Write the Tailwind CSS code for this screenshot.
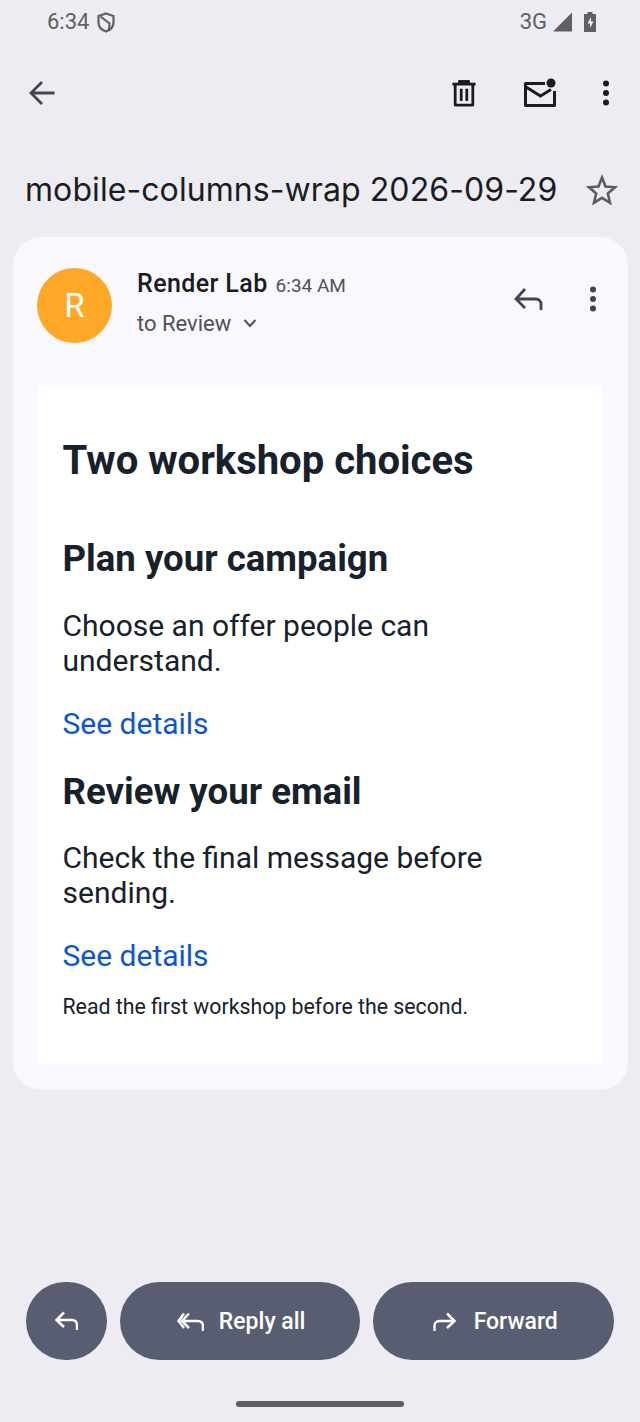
<!DOCTYPE html>
<html lang="en">

<head>
    <meta charset="UTF-8">
    <meta name="viewport" content="width=device-width, initial-scale=1.0">
    <title>mobile-columns-wrap 2026-09-29</title>
    <script src="https://cdn.jsdelivr.net/npm/@tailwindcss/browser@4"></script>
</head>

<body class="bg-[#edecf3] font-['Roboto',sans-serif]">
    <div class="h-[1422px] w-[640px] flex flex-col overflow-hidden">
        <!-- Status bar -->
        <div class="h-[44px] flex items-center justify-between pl-[47px] pr-[43px] text-[#5f5f64]">
            <div class="flex items-center gap-[8px]">
                <span class="text-[22px] leading-none">6:34</span>
                <svg class="w-[18px] h-[21px]" viewBox="0 0 18 21" fill="none" stroke="#5f5f64" stroke-width="2.2">
                    <path d="M9 1.500 16.500 4v6.500c0 4.300-3 7.500-7.500 9-4.500-1.500-7.500-4.700-7.500-9V4z" />
                    <path d="M3.500 4.500 12.500 11.500 12 18" />
                </svg>
            </div>
            <div class="flex items-center">
                <span class="text-[22px] leading-none">3G</span>
                <svg class="w-[20px] h-[20px] ml-[6px]" viewBox="0 0 20 20" fill="#5f5f64">
                    <path d="M0 19.500 19 0.500v19z" />
                </svg>
                <svg class="w-[14px] h-[20px] ml-[10px]" viewBox="0 0 14 20" fill="#5f5f64">
                    <path d="M4.500 0h5v2H13v18H1V2h3.500z" />
                    <path d="M8 5 4.500 11.500H7V16l3.500-6.500H8z" fill="#edecf3" />
                </svg>
            </div>
        </div>

        <!-- Toolbar -->
        <div class="h-[98px] flex items-center justify-between pl-[28px] pr-[30px] pb-[1px]">
            <svg class="w-[28px] h-[28px]" viewBox="0 0 28 28" fill="none" stroke="#44444f" stroke-width="2.800">
                <path d="M26.500 14H4M14 3 3 14l11 11" />
            </svg>
            <div class="flex items-center">
                <svg class="w-[26px] h-[32px]" viewBox="0 0 28 32" fill="none" stroke="#1b1c20" stroke-width="3" stroke-linejoin="round">
                    <path d="M1.500 6.500h25M9 6.500V3.500h10v3M4.500 6.500v22.500h19V6.500" />
                    <path d="M11 11.500v13M17 11.500v13" />
                </svg>
                <svg class="w-[34px] h-[30px] ml-[46px]" viewBox="0 0 34 30" fill="none">
                    <path d="M22 5.500H2.500v22h29V13" stroke="#1b1c20" stroke-width="3" stroke-linejoin="round" />
                    <path d="M3 9l14.500 9L28 11.500" stroke="#1b1c20" stroke-width="3" />
                    <circle cx="28" cy="5" r="4.500" fill="#1b1c20" />
                </svg>
                <svg class="w-[8px] h-[26px] ml-[45px]" viewBox="0 0 8 26" fill="#1b1c20">
                    <circle cx="4" cy="3.500" r="3" />
                    <circle cx="4" cy="13" r="3" />
                    <circle cx="4" cy="22.500" r="3" />
                </svg>
            </div>
        </div>

        <!-- Subject -->
        <div class="h-[95px] flex items-start justify-between pl-[25px] pr-[22px] pt-[26px]">
            <h1 class="text-[32px] leading-[44px] text-[#1b1c20] tracking-[0.08px] font-['Inter',sans-serif] whitespace-nowrap">mobile-columns-wrap 2026-09-29</h1>
            <svg class="w-[32px] h-[31px] mt-[6px]" viewBox="0 0 32 31" fill="none" stroke="#5c5c64" stroke-width="2.600">
                <path d="M16 3.500 19.500 12.500 29 13.300 21.800 19.500 24 28.800 16 23.800 8 28.800 10.200 19.500 3 13.300 12.500 12.500z" />
            </svg>
        </div>

        <!-- Message card -->
        <div class="mx-[12.500px] h-[853px] bg-[#f9f8ff] rounded-[28px] px-[25.500px] flex flex-col">
            <div class="h-[150px] flex items-start pt-[31px]">
                <div class="w-[75px] h-[75px] -ml-[1px] rounded-full bg-[#ffa726] text-white flex items-center justify-center text-[33px] shrink-0">R</div>
                <div class="ml-[25px] flex-1 pt-[1px]">
                    <div class="flex items-baseline">
                        <span class="text-[25px] leading-[30px] font-medium tracking-[0.4px] text-[#1b1c20]">Render Lab</span>
                        <span class="text-[19px] ml-[8px] text-[#50505a]">6:34 AM</span>
                    </div>
                    <div class="flex items-center mt-[8px] text-[#50505a]">
                        <span class="text-[22px] leading-[30px]">to Review</span>
                        <svg class="w-[14px] h-[9px] ml-[12px]" viewBox="0 0 14 9" fill="none" stroke="#50505a" stroke-width="2">
                            <path d="M1.500 1 7 7l5.500-6" />
                        </svg>
                    </div>
                </div>
                <svg class="w-[30px] h-[24px] mt-[19px]" viewBox="0 0 30 24" fill="none" stroke="#44444f" stroke-width="2.800">
                    <path d="M28 23v-6c0-3-2-5-5-5H4M12 2 3 12l9 9" />
                </svg>
                <svg class="w-[8px] h-[26px] ml-[46px] mr-[5px] mt-[18px]" viewBox="0 0 8 26" fill="#44444f">
                    <circle cx="4" cy="3.500" r="3" />
                    <circle cx="4" cy="13" r="3" />
                    <circle cx="4" cy="22.500" r="3" />
                </svg>
            </div>

            <!-- Email body -->
            <div class="bg-white h-[677px] pl-[24.500px] pr-[25px] pt-[49px] text-[#17212b]">
                <h2 class="text-[40px] leading-[50px] font-bold">Two workshop choices</h2>
                <h3 class="text-[36.600px] leading-[44px] font-bold mt-[51px]">Plan your campaign</h3>
                <p class="text-[30px] leading-[34.500px] mt-[28px]">Choose an offer people can understand.</p>
                <a href="#" class="block text-[30px] leading-[34px] text-[#0b57d0] mt-[28.500px]">See details</a>
                <h3 class="text-[36.600px] leading-[44px] font-bold mt-[29px]">Review your email</h3>
                <p class="text-[30px] leading-[34.500px] mt-[27.500px]">Check the final message before sending.</p>
                <a href="#" class="block text-[30px] leading-[34px] text-[#0b57d0] mt-[28.500px]">See details</a>
                <p class="text-[21.300px] leading-[28px] mt-[20.500px]">Read the first workshop before the second.</p>
            </div>
        </div>

        <!-- Bottom actions -->
        <div class="flex-1 flex flex-col justify-end">
            <div class="flex gap-[13px] px-[26px] text-white text-[23px]">
                <button class="w-[81px] h-[78px] rounded-full bg-[#585d71] flex items-center justify-center">
                    <svg class="w-[24px] h-[20px]" viewBox="0 0 24 20" fill="none" stroke="#fff" stroke-width="2.500">
                        <path d="M23 19v-5c0-3-2-5-5-5H3M10 1.500 2.500 9l7.500 7" />
                    </svg>
                </button>
                <button class="w-[241px] h-[78px] rounded-full bg-[#585d71] flex items-center justify-center font-medium pl-[2px] pt-[2px]">
                    <svg class="w-[27px] h-[20px] mr-[15px]" viewBox="0 0 27 20" fill="none" stroke="#fff" stroke-width="2.500">
                        <path d="M26 19v-5c0-3-2-5-5-5H7M12 1.500 5 9l7 7M7 1.500 1.500 9 7 16" />
                    </svg>
                    Reply all
                </button>
                <button class="w-[241px] h-[78px] rounded-full bg-[#585d71] flex items-center justify-center font-medium pl-[3px] pt-[2px]">
                    <svg class="w-[24px] h-[20px] mr-[17px]" viewBox="0 0 24 20" fill="none" stroke="#fff" stroke-width="2.500">
                        <path d="M1.500 19v-5c0-3 2-5 5-5H21M14 1.500 21.500 9 14 16" />
                    </svg>
                    Forward
                </button>
            </div>
            <div class="h-[62px] flex items-end justify-center pb-[15px]">
                <div class="w-[168px] h-[6px] rounded-full bg-[#5f5f5f]"></div>
            </div>
        </div>
    </div>
</body>

</html>
